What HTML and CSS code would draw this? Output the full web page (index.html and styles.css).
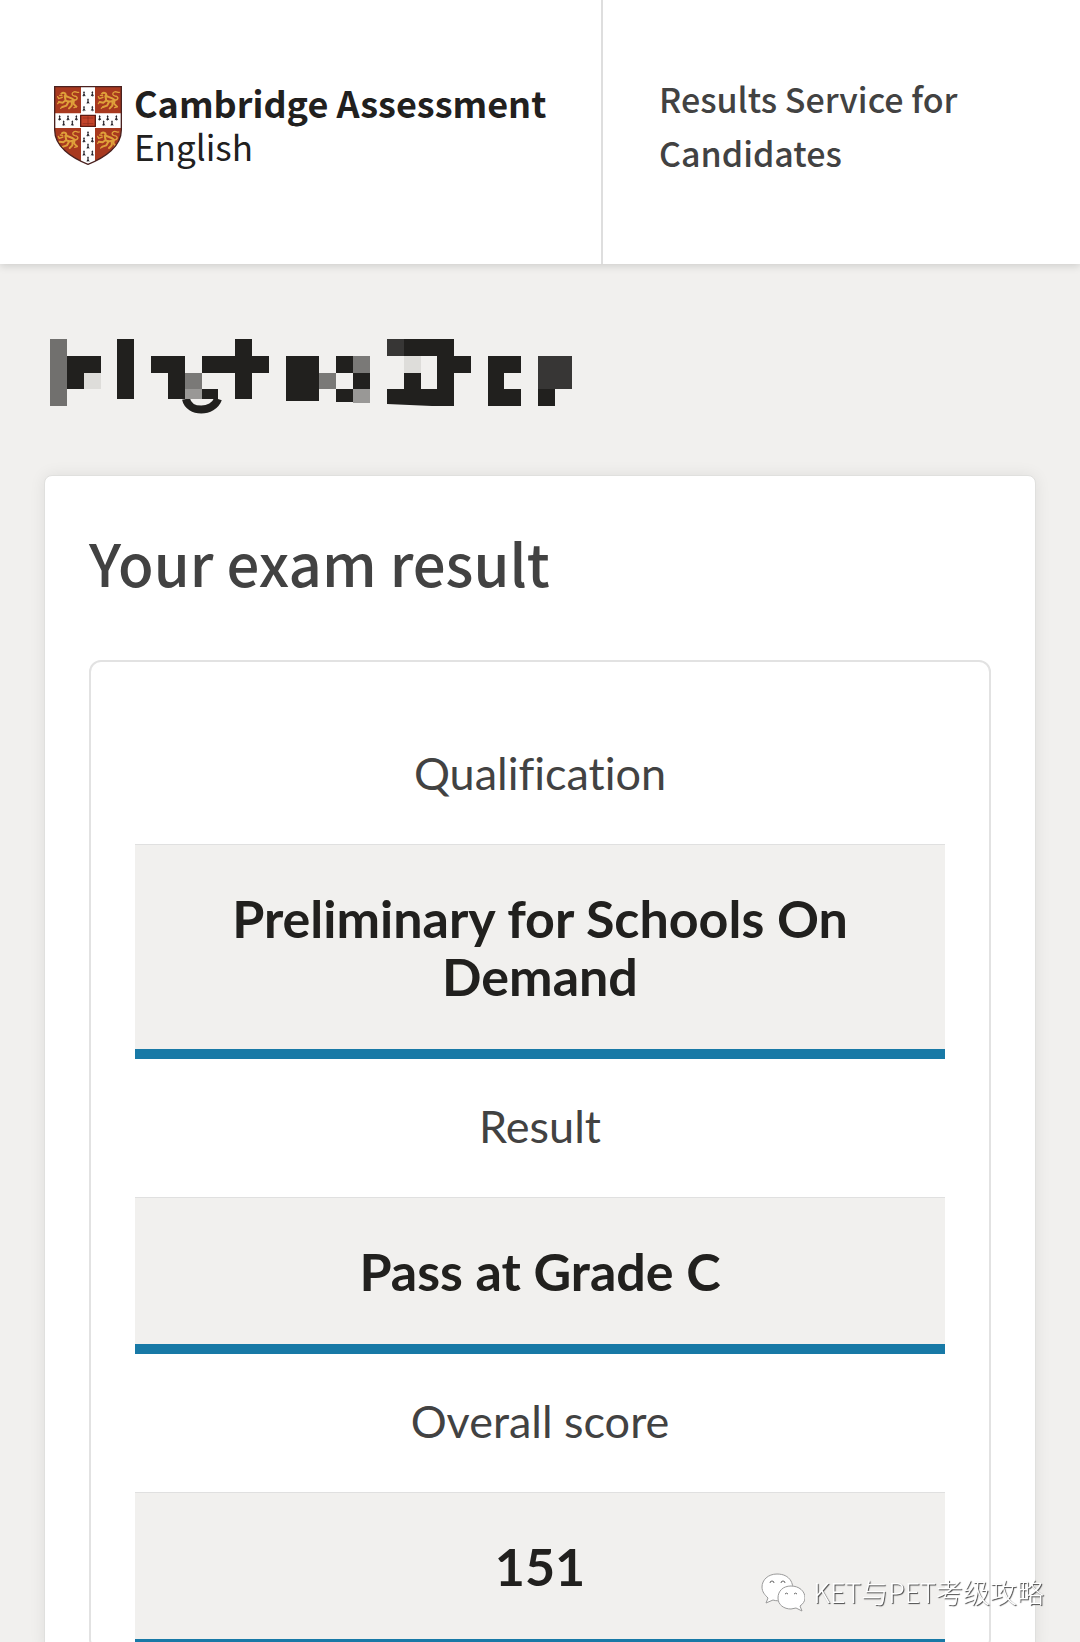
FILE: index.html
```
<!DOCTYPE html>
<html lang="en">
<head>
    <meta charset="UTF-8">
    <meta name="viewport" content="width=device-width, initial-scale=1.0">
    <title>Results Service for Candidates</title>
    <link rel="stylesheet" href="styles.css">
</head>
<body>
    <header class="site-header">
        <a class="brand" href="#">
            <svg class="crest" viewBox="0 0 204 237" aria-hidden="true">
                <defs>
                    <clipPath id="shield">
                        <path d="M2 2H202V132C202 181 153 215 102 235C51 215 2 181 2 132Z"/>
                    </clipPath>
                    <g id="lion" fill="none" stroke="#dfa03a" stroke-width="6" stroke-linecap="round" stroke-linejoin="round">
                        <path d="M19 18C26 12 34 18 31 25C42 29 50 30 57 37L55 48L64 57"/>
                        <path d="M29 25L32 39C40 43 46 42 53 40M32 38L23 45L12 43M40 43L34 54L22 58M51 43L50 54L42 62"/>
                        <path d="M22 29L11 33L8 27M21 24L14 23" stroke-width="4"/>
                        <path d="M56 38C70 37 70 26 58 25C50 24 49 16 56 13C63 10 66 16 71 14" stroke-width="4"/>
                        <path d="M65 57L57 60M12 43L8 48M22 58L17 62" stroke-width="4"/>
                    </g>
                    <g id="ermine" fill="#27252c">
                        <path d="M0-9L3-4L1-2L5 7L1 5L0 9L-2 5L-5 7L-1-2L-3-4Z"/>
                    </g>
                </defs>
                <g clip-path="url(#shield)">
                    <path fill="#a8391f" d="M0 0H204V237H0Z"/>
                    <path fill="#fff" d="M81 0H123V237H81ZM0 82H204V126H0Z"/>
                    <use href="#lion" x="3" y="5"/>
                    <use href="#lion" x="125" y="5"/>
                    <use href="#lion" x="5" y="124"/>
                    <use href="#lion" x="123" y="124"/>
                    <use href="#ermine" x="90" y="24"/>
                    <use href="#ermine" x="115" y="24"/>
                    <use href="#ermine" x="102" y="46"/>
                    <use href="#ermine" x="90" y="68"/>
                    <use href="#ermine" x="115" y="68"/>
                    <use href="#ermine" x="17" y="96"/>
                    <use href="#ermine" x="29" y="112"/>
                    <use href="#ermine" x="42" y="96"/>
                    <use href="#ermine" x="55" y="112"/>
                    <use href="#ermine" x="67" y="96"/>
                    <use href="#ermine" x="137" y="96"/>
                    <use href="#ermine" x="149" y="112"/>
                    <use href="#ermine" x="161" y="96"/>
                    <use href="#ermine" x="174" y="112"/>
                    <use href="#ermine" x="187" y="96"/>
                    <use href="#ermine" x="102" y="144"/>
                    <use href="#ermine" x="90" y="162"/>
                    <use href="#ermine" x="115" y="162"/>
                    <use href="#ermine" x="102" y="181"/>
                    <use href="#ermine" x="90" y="202"/>
                    <use href="#ermine" x="115" y="202"/>
                    <use href="#ermine" x="102" y="220"/>
                </g>
                <path fill="#c5442a" stroke="#5b1b13" stroke-width="4" d="M80 88H124V121H80Z"/>
                <path fill="none" stroke="#8a2a1c" stroke-width="2" d="M86 96H118M86 113H118M102 91V118"/>
                <path fill="none" stroke="#4a2220" stroke-width="4" d="M2 2H202V132C202 181 153 215 102 235C51 215 2 181 2 132Z"/>
            </svg>
            <span class="brand-text">
                <strong class="brand-name">Cambridge Assessment</strong>
                <span class="brand-sub">English</span>
            </span>
        </a>
        <p class="service-name">Results Service for Candidates</p>
    </header>

    <main>
        <!-- Candidate name, hidden -->
        <h1 class="candidate">
            <svg class="candidate-mask" viewBox="0 0 522 75" role="img" aria-label="Candidate name hidden">
                <g fill="#21201e">
                    <path d="M17 17H51V34H34V50H17ZM67 0H84V60H67ZM101 17H135V60H118V34H101Z"/>
                    <path d="M152 17H185V0H202V17H219V34H202V60H185V34H152ZM152 50H168V60H152Z"/>
                    <path d="M236 17H269V62H236ZM286 17H303V34H286ZM303 34H320V50H303ZM286 50H303V63H286Z"/>
                    <path fill-rule="evenodd" d="M337 0H404V17H421V34H404V67H382L337 65V50H354V34H371V50H387V17H337Z"/>
                    <path d="M438 17H471V34H454V50H471V67H438Z"/>
                    <path d="M488 50H505V67H488Z"/>
                </g>
                <path fill="none" stroke="#21201e" stroke-width="8" d="M136 60C139 74 163 74 168 60"/>
                <path fill="#71706e" d="M0 0H17V67H0Z"/>
                <path fill="#deddda" d="M34 34H51V50H34ZM354 17H371V34H354Z"/>
                <path fill="#7a7977" d="M135 34H152V50H135ZM269 34H286V50H269ZM303 17H320V34H303Z"/>
                <path fill="#999896" d="M135 50H152V60H135ZM303 50H320V64H303Z"/>
                <path fill="#373635" d="M337 0H354V17H337ZM488 17H522V50H488Z"/>
            </svg>
        </h1>

        <section class="card">
            <h2>Your exam result</h2>
            <dl class="results">
                <dt>Qualification</dt>
                <dd>Preliminary for Schools On Demand</dd>
                <dt>Result</dt>
                <dd>Pass at Grade C</dd>
                <dt>Overall score</dt>
                <dd>151</dd>
            </dl>
        </section>
    </main>

    <div class="watermark">
        <svg class="wechat" viewBox="0 0 44 40" aria-hidden="true">
            <g fill="#fff" stroke="#999" stroke-width="1">
                <path d="M16 2C7 2 1 8 1 15C1 20 4 23 7 26L5 31L12 28C15 29 18 29 21 28C32 26 34 17 30 9C27 4 22 2 16 2Z"/>
                <path d="M30 14C22 14 17 19 17 26C17 33 23 37 30 37L35 36L41 39L39 34C42 32 44 29 44 26C44 19 38 14 30 14Z"/>
            </g>
            <path fill="none" stroke="#666" stroke-width="1" d="M9 11a2 2 0 0 1 4 0M20 11a2 2 0 0 1 4 0M24 22a2 2 0 0 1 3 0M33 22a2 2 0 0 1 3 0"/>
        </svg>
        <span>KET与PET考级攻略</span>
    </div>
</body>
</html>
```
FILE: styles.css
```
body {
    font-family: 'Lato', sans-serif;
    margin: 0;
    background-color: #f1f0ee;
    color: #424242;
    height: 100vh;
    overflow: hidden;
}

/* Header */
.site-header {
    display: grid;
    grid-template-columns: 603px 1fr;
    height: 264px;
    background-color: #fff;
    box-shadow: 0 2px 8px rgba(0, 0, 0, 0.15);
    font-family: 'Noto Sans CJK SC', sans-serif;
}

.brand {
    display: flex;
    align-items: flex-start;
    gap: 12px;
    padding: 80px 0 0 54px;
    border-right: 2px solid #dedede;
    color: #21201e;
    text-decoration: none;
}

.crest {
    width: 68px;
    height: 79px;
    margin-top: 6px;
}

.brand-text {
    display: flex;
    flex-direction: column;
    line-height: 44px;
    white-space: nowrap;
}

.brand-name {
    font-size: 36px;
    font-weight: 700;
}

.brand-sub {
    font-size: 35px;
}

.service-name {
    margin: 0;
    padding: 72px 56px 0;
    font-size: 34px;
    font-weight: 500;
    line-height: 54px;
}

/* Results */
main {
    padding: 75px 44px 0;
}

.candidate {
    margin: 0 0 61px 6px;
    line-height: 0;
}

.candidate-mask {
    width: 522px;
    height: 75px;
}

.card {
    padding: 44px 44px 0;
    background-color: #fff;
    border: 1px solid #e0e0de;
    border-radius: 8px;
    box-shadow: 0 0 16px rgba(0, 0, 0, 0.08);
}

.card h2 {
    margin: 0 0 56px;
    font-family: 'Noto Sans CJK SC', sans-serif;
    font-size: 58px;
    font-weight: 500;
    line-height: 84px;
}

.results {
    margin: 0;
    padding: 44px 44px 0;
    border: 2px solid #e2e2e2;
    border-radius: 12px;
    text-align: center;
    line-height: 58px;
    font-variant-ligatures: none;
}

.results dt {
    padding: 38px 0 42px;
    font-size: 45px;
}

.results dd {
    margin: 0;
    padding: 44px;
    border-top: 1px solid #e0e0e0;
    border-bottom: 10px solid #1879a6;
    background-color: #f1f0ee;
    color: #21201e;
    font-size: 52px;
    font-weight: 700;
}

/* Account watermark over the page */
.watermark {
    position: fixed;
    right: 36px;
    bottom: 30px;
    display: flex;
    align-items: center;
    gap: 8px;
    color: #fff;
    font-family: 'Noto Sans CJK SC', sans-serif;
    font-size: 27px;
    font-weight: 300;
    line-height: 40px;
    text-shadow: 1px 1px 1px #444;
}

.wechat {
    width: 44px;
    height: 40px;
}
```
